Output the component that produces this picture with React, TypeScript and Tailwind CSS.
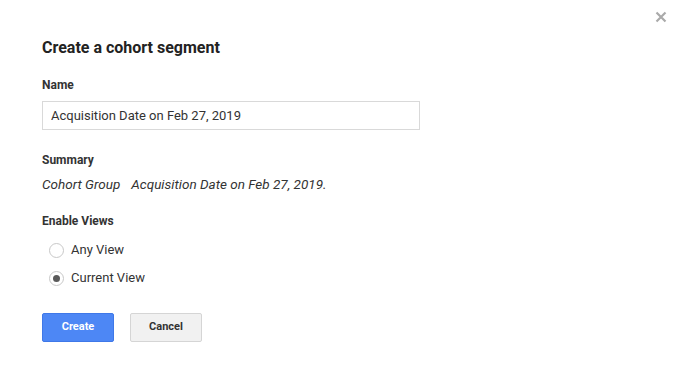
import React, { useState } from "react"

export default function App() {
  const [view, setView] = useState<"any" | "current">("current")
  const [name, setName] = useState("Acquisition Date on Feb 27, 2019")

  const radio = (value: "any" | "current", label: string) => (
    <label className="flex items-center gap-[7px] h-[28px] cursor-pointer">
      <span
        className="w-[15px] h-[15px] rounded-full border border-[#c8c8c8] bg-white flex items-center justify-center"
        onClick={() => setView(value)}
      >
        {view === value && <span className="w-[7px] h-[7px] rounded-full bg-[#5a5a5a]" />}
      </span>
      <span className="text-[13px] text-[#333]">{label}</span>
    </label>
  )

  return (
    <div className="w-[682px] h-[371px] bg-white relative" style={{ fontFamily: "Roboto, 'Liberation Sans', sans-serif" }}>
      <button type="button" className="absolute right-[15px] top-[11px] text-[#aaa]" aria-label="Close">
        <svg width="12" height="12" viewBox="0 0 12 12">
          <path d="M1.5 1.5 L10.5 10.5 M10.5 1.5 L1.5 10.5" stroke="currentColor" strokeWidth="2.2" />
        </svg>
      </button>

      <div className="pl-[42px] pt-[38px]">
        <h1 className="text-[16px] font-bold text-[#222] leading-[20px]">Create a cohort segment</h1>

        <div className="mt-[19px] text-[12px] font-bold text-[#333] leading-[16px]">Name</div>
        <input
          value={name}
          onChange={(e) => setName(e.target.value)}
          className="mt-[8px] w-[378px] h-[29px] border border-[#d9d9d9] px-[8px] text-[13px] text-[#333] outline-none"
        />

        <div className="mt-[22px] text-[12px] font-bold text-[#333] leading-[16px]">Summary</div>
        <div className="mt-[8px] text-[13.5px] italic text-[#333] leading-[16px]">
          Cohort Group<span className="ml-[11px]">Acquisition Date on Feb 27, 2019.</span>
        </div>

        <div className="mt-[21px] text-[12px] font-bold text-[#333] leading-[16px]">Enable Views</div>
        <div className="mt-[7px] pl-[7px] flex flex-col">
          {radio("any", "Any View")}
          {radio("current", "Current View")}
        </div>

        <div className="mt-[21px] flex gap-[16px]">
          <button
            type="button"
            className="w-[72px] h-[29px] rounded-[2px] bg-[#4d87f5] border border-[#3f78e8] text-white text-[11px] font-bold"
          >
            Create
          </button>
          <button
            type="button"
            className="w-[72px] h-[29px] rounded-[2px] bg-[#f1f1f1] border border-[#d5d5d5] text-[#333] text-[11px] font-bold"
          >
            Cancel
          </button>
        </div>
      </div>
    </div>
  )
}
